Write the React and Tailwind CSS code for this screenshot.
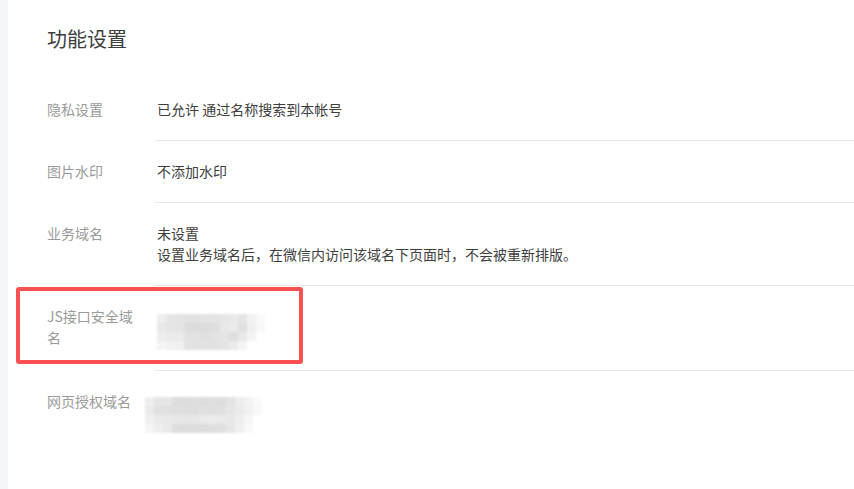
const jsMosaic = [
  ["bg-[#eeeeee]", "bg-[#e6e6e6]", "bg-[#e3e3e3]", "bg-[#e2e2e2]", "bg-[#e2e2e2]", "bg-[#e3e3e3]", "bg-[#e4e4e4]", "bg-[#e6e6e6]", "bg-[#e9e9e9]", "bg-[#e4e4e4]", "bg-[#f2f2f2]", "bg-[#fafafa]"],
  ["bg-[#e8e8e8]", "bg-[#e5e5e5]", "bg-[#e4e4e4]", "bg-[#dcdcdc]", "bg-[#dbdbdb]", "bg-[#dcdcdc]", "bg-[#dedede]", "bg-[#e8e8e8]", "bg-[#ebebeb]", "bg-[#e0e0e0]", "bg-[#efefef]", "bg-[#f8f8f8]"],
  ["bg-[#ededed]", "bg-[#eaeaea]", "bg-[#ebebeb]", "bg-[#e1e1e1]", "bg-[#e2e2e2]", "bg-[#e0e0e0]", "bg-[#e3e3e3]", "bg-[#e5e5e5]", "bg-[#dedede]", "bg-[#e8e8e8]", "bg-[#f4f4f4]", "bg-white"],
  ["bg-[#f5f5f5]", "bg-[#f2f2f2]", "bg-[#f0f0f0]", "bg-[#e3e3e3]", "bg-[#e2e2e2]", "bg-[#e2e2e2]", "bg-[#e2e2e2]", "bg-[#e4e4e4]", "bg-[#eaeaea]", "bg-[#f4f4f4]", "bg-white", "bg-white"],
];

const webMosaic = [
  ["bg-[#eeeeee]", "bg-[#e5e5e5]", "bg-[#e6e6e6]", "bg-[#dddddd]", "bg-[#dcdcdc]", "bg-[#dedede]", "bg-[#dcdcdc]", "bg-[#dfdfdf]", "bg-[#dddddd]", "bg-[#e3e3e3]", "bg-[#ededed]", "bg-[#f3f3f3]", "bg-[#fafafa]", "bg-white"],
  ["bg-[#eaeaea]", "bg-[#e1e1e1]", "bg-[#e0e0e0]", "bg-[#dfdfdf]", "bg-[#dedede]", "bg-[#dddddd]", "bg-[#e0e0e0]", "bg-[#dedede]", "bg-[#e1e1e1]", "bg-[#e5e5e5]", "bg-[#eaeaea]", "bg-[#f1f1f1]", "bg-[#f8f8f8]", "bg-white"],
  ["bg-[#f0f0f0]", "bg-[#e9e9e9]", "bg-[#e8e8e8]", "bg-[#e7e7e7]", "bg-[#e6e6e6]", "bg-[#e7e7e7]", "bg-[#e9e9e9]", "bg-[#ebebeb]", "bg-[#eaeaea]", "bg-[#e8e8e8]", "bg-[#eeeeee]", "bg-[#f6f6f6]", "bg-white", "bg-white"],
  ["bg-[#f5f5f5]", "bg-[#eeeeee]", "bg-[#eaeaea]", "bg-[#dedede]", "bg-[#dcdcdc]", "bg-[#dddddd]", "bg-[#dcdcdc]", "bg-[#dedede]", "bg-[#e0e0e0]", "bg-[#e6e6e6]", "bg-[#f0f0f0]", "bg-[#f9f9f9]", "bg-white", "bg-white"],
];

function Mosaic({ cells, className }) {
  return (
    <div className={"flex flex-col blur-[1px] " + className}>
      {cells.map((row, i) => (
        <div key={i} className="flex">
          {row.map((c, j) => (
            <div key={j} className={"w-[9px] h-[9px] " + c}></div>
          ))}
        </div>
      ))}
    </div>
  );
}

function Row({ label, children }) {
  return (
    <div className="flex">
      <div className="w-[108px] shrink-0 pr-[18px] py-5 text-[#9a9a9a]">{label}</div>
      <div className="flex-1 py-5 pl-[2px] border-b border-[#e8e8e8] text-[#3e3e3e]">
        {children}
      </div>
    </div>
  );
}

export default function App() {
  return (
    <div
      className="relative flex min-h-screen bg-white text-[14px] leading-[21px]"
      style={{ fontFamily: '"Noto Sans CJK SC", "Noto Sans", sans-serif' }}
    >
      <div className="w-[8px] shrink-0 bg-[#f4f5f7]"></div>

      <main className="flex-1 pl-[39px] pt-[25px]">
        <h1 className="text-[20px] leading-[28px] text-[#3e3e3e] mb-[26px]">功能设置</h1>

        <Row label="隐私设置">已允许 通过名称搜索到本帐号</Row>
        <Row label="图片水印">不添加水印</Row>
        <Row label="业务域名">
          <p>未设置</p>
          <p>设置业务域名后，在微信内访问该域名下页面时，不会被重新排版。</p>
        </Row>
        <Row label="JS接口安全域名">
          <Mosaic cells={jsMosaic} className="mt-[8px]" />
        </Row>
        <div className="flex">
          <div className="w-[108px] shrink-0 pr-[18px] py-5 text-[#9a9a9a]">网页授权域名</div>
          <div className="flex-1 pt-[26px]">
            <Mosaic cells={webMosaic} className="-ml-[10px]" />
          </div>
        </div>
      </main>

      {/* red annotation box */}
      <div className="absolute left-[16px] top-[287px] w-[287px] h-[77px] border-4 border-[#fa5252] rounded-[3px]"></div>
    </div>
  );
}
